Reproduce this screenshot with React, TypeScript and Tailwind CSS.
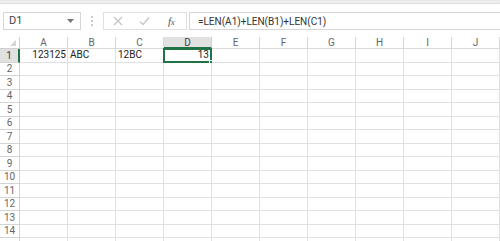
import React from "react";

const cols = ["A", "B", "C", "D", "E", "F", "G", "H", "I", "J"];
const rows = Array.from({ length: 15 }, (_, i) => i + 1);

const data: Record<string, { v: string; right?: boolean }> = {
  A1: { v: "123125", right: true },
  B1: { v: "ABC" },
  C1: { v: "12BC" },
  D1: { v: "13", right: true },
};

export default function App() {
  return (
    <div
      className="w-[500px] h-[241px] overflow-hidden bg-white text-[#222]"
      style={{ fontFamily: "Roboto, 'Liberation Sans', sans-serif" }}
    >
      {/* top strip */}
      <div className="h-[4px] bg-gradient-to-b from-[#e6e6e6] to-[#f3f3f3] border-b border-[#dedede]" />
      {/* formula bar */}
      <div className="h-[33px] flex items-start pt-[8px]">
        <div className="ml-[3px] w-[78px] h-[18px] border border-[#d6d6d6] flex items-center justify-between pl-[5px] pr-[6px]">
          <span className="text-[11px] text-[#444]">D1</span>
          <svg width="7" height="4" viewBox="0 0 7 4">
            <path d="M0 0 L7 0 L3.5 4 Z" fill="#777" />
          </svg>
        </div>
        <div className="w-[22px] h-[18px] flex flex-col items-center justify-center gap-[2px]">
          <span className="w-[2px] h-[2px] bg-[#bbb] rounded-full" />
          <span className="w-[2px] h-[2px] bg-[#bbb] rounded-full" />
          <span className="w-[2px] h-[2px] bg-[#bbb] rounded-full" />
        </div>
        <div className="w-[84px] h-[18px] border border-[#e0e0e0] flex items-center">
          <svg width="10" height="10" viewBox="0 0 10 10" className="ml-[9px]">
            <path d="M1 1 L9 9 M9 1 L1 9" stroke="#c4c4c4" strokeWidth="1.2" />
          </svg>
          <svg width="11" height="10" viewBox="0 0 11 10" className="ml-[16px]">
            <path d="M1 5.5 L4 8.5 L10 1.5" stroke="#c4c4c4" strokeWidth="1.2" fill="none" />
          </svg>
          <span
            className="ml-[18px] text-[11px] italic text-[#555]"
            style={{ fontFamily: "'Liberation Serif', serif" }}
          >
            f<span className="text-[8px]">x</span>
          </span>
        </div>
        <div className="ml-[2px] flex-1 h-[18px] border border-[#d6d6d6] border-r-0 flex items-center pl-[8px]">
          <span className="text-[10px] text-[#333]">=LEN(A1)+LEN(B1)+LEN(C1)</span>
        </div>
      </div>
      {/* grid */}
      <div className="grid grid-cols-[20px_repeat(10,48px)] grid-rows-[12px_repeat(15,13.5px)]">
        <div className="border-r border-b border-[#cfcfcf] relative">
          <svg width="6" height="6" viewBox="0 0 6 6" className="absolute right-[3px] bottom-[2px]">
            <path d="M6 0 L6 6 L0 6 Z" fill="#d4d4d4" />
          </svg>
        </div>
        {cols.map((c) => (
          <div
            key={c}
            className={
              c === "D"
                ? "bg-[#e1e1e1] border-r border-[#cfcfcf] border-b-2 border-b-[#217346] flex items-center justify-center text-[10px] text-[#444]"
                : "border-r border-b border-[#dadada] flex items-center justify-center text-[10px] text-[#666]"
            }
          >
            {c}
          </div>
        ))}
        {rows.map((r) => (
          <React.Fragment key={r}>
            <div
              className={
                r === 1
                  ? "bg-[#e1e1e1] border-b border-[#d4d4d4] border-r-2 border-r-[#217346] flex items-center justify-center text-[10px] text-[#444]"
                  : "border-r border-b border-[#d4d4d4] flex items-center justify-center text-[10px] text-[#666]"
              }
            >
              {r < 15 ? r : ""}
            </div>
            {cols.map((c) => {
              const key = `${c}${r}`;
              const d = data[key];
              const sel = key === "D1";
              return (
                <div
                  key={key}
                  className={
                    sel
                      ? "relative border-2 border-[#217346] -mt-[1px] -ml-[1px] flex items-center justify-end pr-[1px] text-[10px] text-[#222] leading-none"
                      : `relative border-r border-b border-[#e0e0e0] flex items-center text-[10px] text-[#222] leading-none ${
                          d?.right ? "justify-end pr-[1px]" : "justify-start pl-[2px]"
                        }`
                  }
                >
                  {d?.v}
                  {sel && (
                    <span className="absolute -right-[3px] -bottom-[3px] w-[4px] h-[4px] bg-[#217346] border border-white" />
                  )}
                </div>
              );
            })}
          </React.Fragment>
        ))}
      </div>
    </div>
  );
}
